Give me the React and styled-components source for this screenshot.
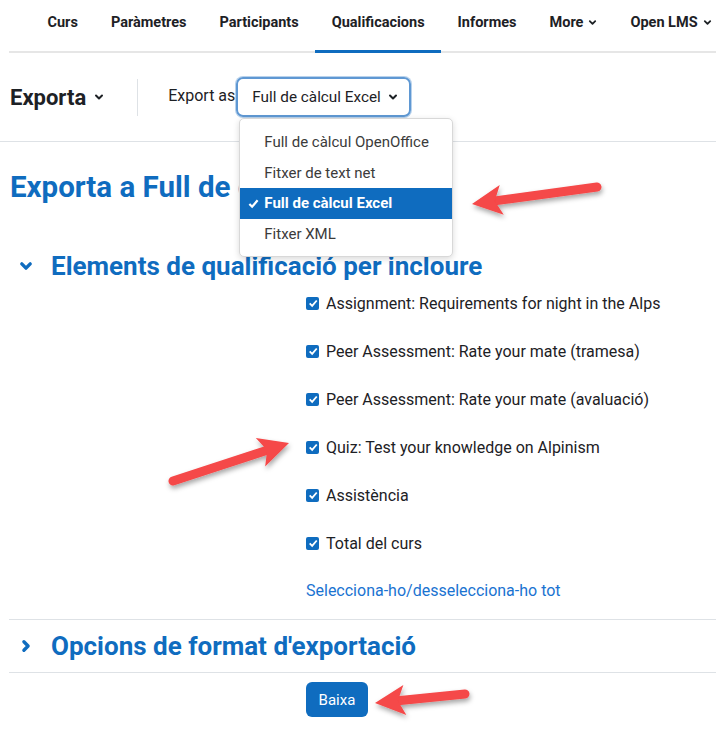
import React from 'react';
import styled, { createGlobalStyle } from 'styled-components';

const GlobalStyle = createGlobalStyle`
  body {
    margin: 0;
    background: #fff;
    font-family: Roboto, "Liberation Sans", sans-serif;
    color: #1d2125;
  }
`;

const navItems = ['Curs', 'Paràmetres', 'Participants', 'Qualificacions', 'Informes', 'More', 'Open LMS'];
const withCaret = ['More', 'Open LMS'];

const menuItems = ['Full de càlcul OpenOffice', 'Fitxer de text net', 'Full de càlcul Excel', 'Fitxer XML'];

const gradeItems = [
  'Assignment: Requirements for night in the Alps',
  'Peer Assessment: Rate your mate (tramesa)',
  'Peer Assessment: Rate your mate (avaluació)',
  'Quiz: Test your knowledge on Alpinism',
  'Assistència',
  'Total del curs',
];

const Chevron = ({ size = 10, dir = 'down', width = 2 }) => (
  <svg width={size} height={size} viewBox="0 0 10 10" style={{ transform: dir === 'right' ? 'rotate(-90deg)' : 'none' }}>
    <path d="M2 3.5 L5 6.5 L8 3.5" fill="none" stroke="currentColor" strokeWidth={width} strokeLinecap="round" strokeLinejoin="round" />
  </svg>
);

const Arrow = ({ from, to }) => {
  const [x1, y1] = from;
  const [x2, y2] = to;
  const len = Math.hypot(x2 - x1, y2 - y1);
  const ux = (x2 - x1) / len;
  const uy = (y2 - y1) / len;
  const nx = -uy;
  const ny = ux;
  const L = 30;
  const W = 15;
  const bx = x2 - ux * L;
  const by = y2 - uy * L;
  const mx = bx + ux * 7;
  const my = by + uy * 7;
  const pts = [
    [x2, y2],
    [bx + nx * W, by + ny * W],
    [mx, my],
    [bx - nx * W, by - ny * W],
  ].map((p) => p.join(',')).join(' ');
  return (
    <g filter="url(#shadow)">
      <line x1={x1} y1={y1} x2={mx} y2={my} stroke="#f54848" strokeWidth="9" strokeLinecap="round" />
      <polygon points={pts} fill="#f54848" />
    </g>
  );
};

const App = () => (
  <Page>
    <GlobalStyle />
    <Nav>
      {navItems.map((item) => (
        <NavItem key={item} active={item === 'Qualificacions'}>
          {item}
          {withCaret.includes(item) && <Chevron size={9} />}
        </NavItem>
      ))}
    </Nav>

    <Tertiary>
      <ActionTitle>
        Exporta <Chevron size={10} />
      </ActionTitle>
      <Divider />
      <ExportLabel>Export as</ExportLabel>
      <SelectWrap>
        <Select>
          Full de càlcul Excel <Chevron size={10} />
        </Select>
        <Menu>
          {menuItems.map((m) => (
            <MenuItem key={m} selected={m === 'Full de càlcul Excel'}>
              {m === 'Full de càlcul Excel' && (
                <Check>
                  <svg width="11" height="11" viewBox="0 0 12 12">
                    <path d="M1.5 6.5 L4.5 9.5 L10.5 2.5" fill="none" stroke="#fff" strokeWidth="2.4" />
                  </svg>
                </Check>
              )}
              {m}
            </MenuItem>
          ))}
        </Menu>
      </SelectWrap>
    </Tertiary>

    <Content>
      <PageTitle>Exporta a Full de càlcul Excel</PageTitle>

      <Legend>
        <LegendIcon><Chevron size={14} width={2.4} /></LegendIcon>
        Elements de qualificació per incloure
      </Legend>
      <Fields>
        {gradeItems.map((g) => (
          <CheckRow key={g}>
            <Box>
              <svg width="10" height="10" viewBox="0 0 12 12">
                <path d="M2 6.5 L5 9.5 L10.5 3" fill="none" stroke="#fff" strokeWidth="2.2" />
              </svg>
            </Box>
            {g}
          </CheckRow>
        ))}
        <SelectAll>Selecciona-ho/desselecciona-ho tot</SelectAll>
      </Fields>

      <Collapsed>
        <Legend as="div">
          <LegendIcon><Chevron size={14} width={2.4} dir="right" /></LegendIcon>
          Opcions de format d'exportació
        </Legend>
      </Collapsed>

      <Actions>
        <Button>Baixa</Button>
      </Actions>
    </Content>

    <Overlay width="716" height="735" viewBox="0 0 716 735">
      <defs>
        <filter id="shadow" x="-20%" y="-50%" width="140%" height="200%">
          <feDropShadow dx="1" dy="3" stdDeviation="2.5" floodColor="#000" floodOpacity="0.35" />
        </filter>
      </defs>
      <Arrow from={[597, 187]} to={[472, 204]} />
      <Arrow from={[173, 481]} to={[289, 443]} />
      <Arrow from={[465, 694]} to={[375, 703]} />
    </Overlay>
  </Page>
);

const Page = styled.div`
  position: relative;
  width: 716px;
  height: 735px;
  overflow: hidden;
`;

const Nav = styled.nav`
  display: flex;
  margin-left: 9px;
  padding-left: 22px;
  height: 53px;
  border-bottom: 2px solid #e6e6e6;
  box-sizing: border-box;
  white-space: nowrap;
`;

const NavItem = styled.div`
  display: flex;
  align-items: center;
  gap: 5px;
  padding: 0 16.5px 6px;
  font-size: 14.5px;
  font-weight: 700;
  color: #1d2125;
  margin-bottom: -2px;
  border-bottom: 3px solid ${(p) => (p.active ? '#0f6cbf' : 'transparent')};
  flex-shrink: 0;
`;

const Tertiary = styled.div`
  display: flex;
  align-items: center;
  height: 89px;
  padding-left: 10px;
  border-bottom: 1px solid #dee2e6;
  box-sizing: border-box;
`;

const ActionTitle = styled.div`
  display: flex;
  align-items: center;
  gap: 8px;
  font-size: 22px;
  font-weight: 700;
  color: #1d2125;
`;

const Divider = styled.div`
  width: 1px;
  height: 37px;
  background: #dee2e6;
  margin: 0 30px 0 33px;
`;

const ExportLabel = styled.span`
  font-size: 16px;
  margin-top: -4px;
`;

const SelectWrap = styled.div`
  position: relative;
  margin-left: 1px;
`;

const Select = styled.div`
  display: flex;
  align-items: center;
  gap: 7px;
  height: 40px;
  box-sizing: border-box;
  padding: 0 11px 0 14px;
  border: 2px solid #5f98d3;
  border-radius: 7px;
  box-shadow: 0 0 0 1px #b8d2ec;
  font-size: 15.3px;
  color: #1d2125;
  white-space: nowrap;
`;

const Menu = styled.div`
  position: absolute;
  left: 3px;
  top: 41px;
  width: 214px;
  padding: 8px 0 7px;
  background: #fff;
  border: 1px solid #d8d8d8;
  border-radius: 5px;
  box-shadow: 0 2px 6px rgba(0, 0, 0, 0.15);
  box-sizing: border-box;
  z-index: 2;
`;

const MenuItem = styled.div`
  position: relative;
  height: 30.5px;
  line-height: 30.5px;
  padding-left: 24px;
  font-size: 15px;
  color: ${(p) => (p.selected ? '#fff' : '#3b3b3b')};
  background: ${(p) => (p.selected ? '#0f6cbf' : 'transparent')};
  font-weight: ${(p) => (p.selected ? 700 : 400)};
  white-space: nowrap;
`;

const Check = styled.span`
  position: absolute;
  left: 8px;
  top: 1px;
`;

const Content = styled.div`
  padding-left: 9px;
`;

const PageTitle = styled.h2`
  margin: 28px 0 0 1px;
  font-size: 29.5px;
  font-weight: 700;
  line-height: 34px;
  color: #0f6cbf;
  white-space: nowrap;
`;

const Legend = styled.div`
  display: flex;
  align-items: center;
  gap: 18px;
  margin: 48px 0 0 0;
  padding-left: 10px;
  font-size: 26px;
  font-weight: 700;
  line-height: 28px;
  color: #0f6cbf;
  white-space: nowrap;
`;

const LegendIcon = styled.span`
  display: flex;
  color: #0f6cbf;
`;

const Fields = styled.div`
  display: flex;
  flex-direction: column;
  padding: 0 0 0 297px;
  margin-top: -1px;
  border-bottom: 1px solid #dee2e6;
`;

const CheckRow = styled.label`
  display: flex;
  align-items: center;
  gap: 7px;
  height: 48px;
  font-size: 16px;
  color: #1d2125;
`;

const Box = styled.span`
  display: flex;
  align-items: center;
  justify-content: center;
  width: 13px;
  height: 13px;
  border-radius: 2px;
  background: #0f6cbf;
`;

const SelectAll = styled.a`
  display: block;
  height: 48px;
  line-height: 48px;
  font-size: 16px;
  color: #1a73d1;
  margin-bottom: 4px;
`;

const Collapsed = styled.div`
  height: 52px;
  display: flex;
  align-items: center;
  border-bottom: 1px solid #dee2e6;
  & > div {
    margin: 0;
  }
`;

const Actions = styled.div`
  padding: 9px 0 0 297px;
`;

const Button = styled.button`
  height: 35px;
  width: 62px;
  border: none;
  border-radius: 6px;
  background: #0f6cbf;
  color: #fff;
  font-family: Roboto, sans-serif;
  font-size: 15px;
`;

const Overlay = styled.svg`
  position: absolute;
  left: 0;
  top: 0;
  pointer-events: none;
  z-index: 5;
`;

export default App;
